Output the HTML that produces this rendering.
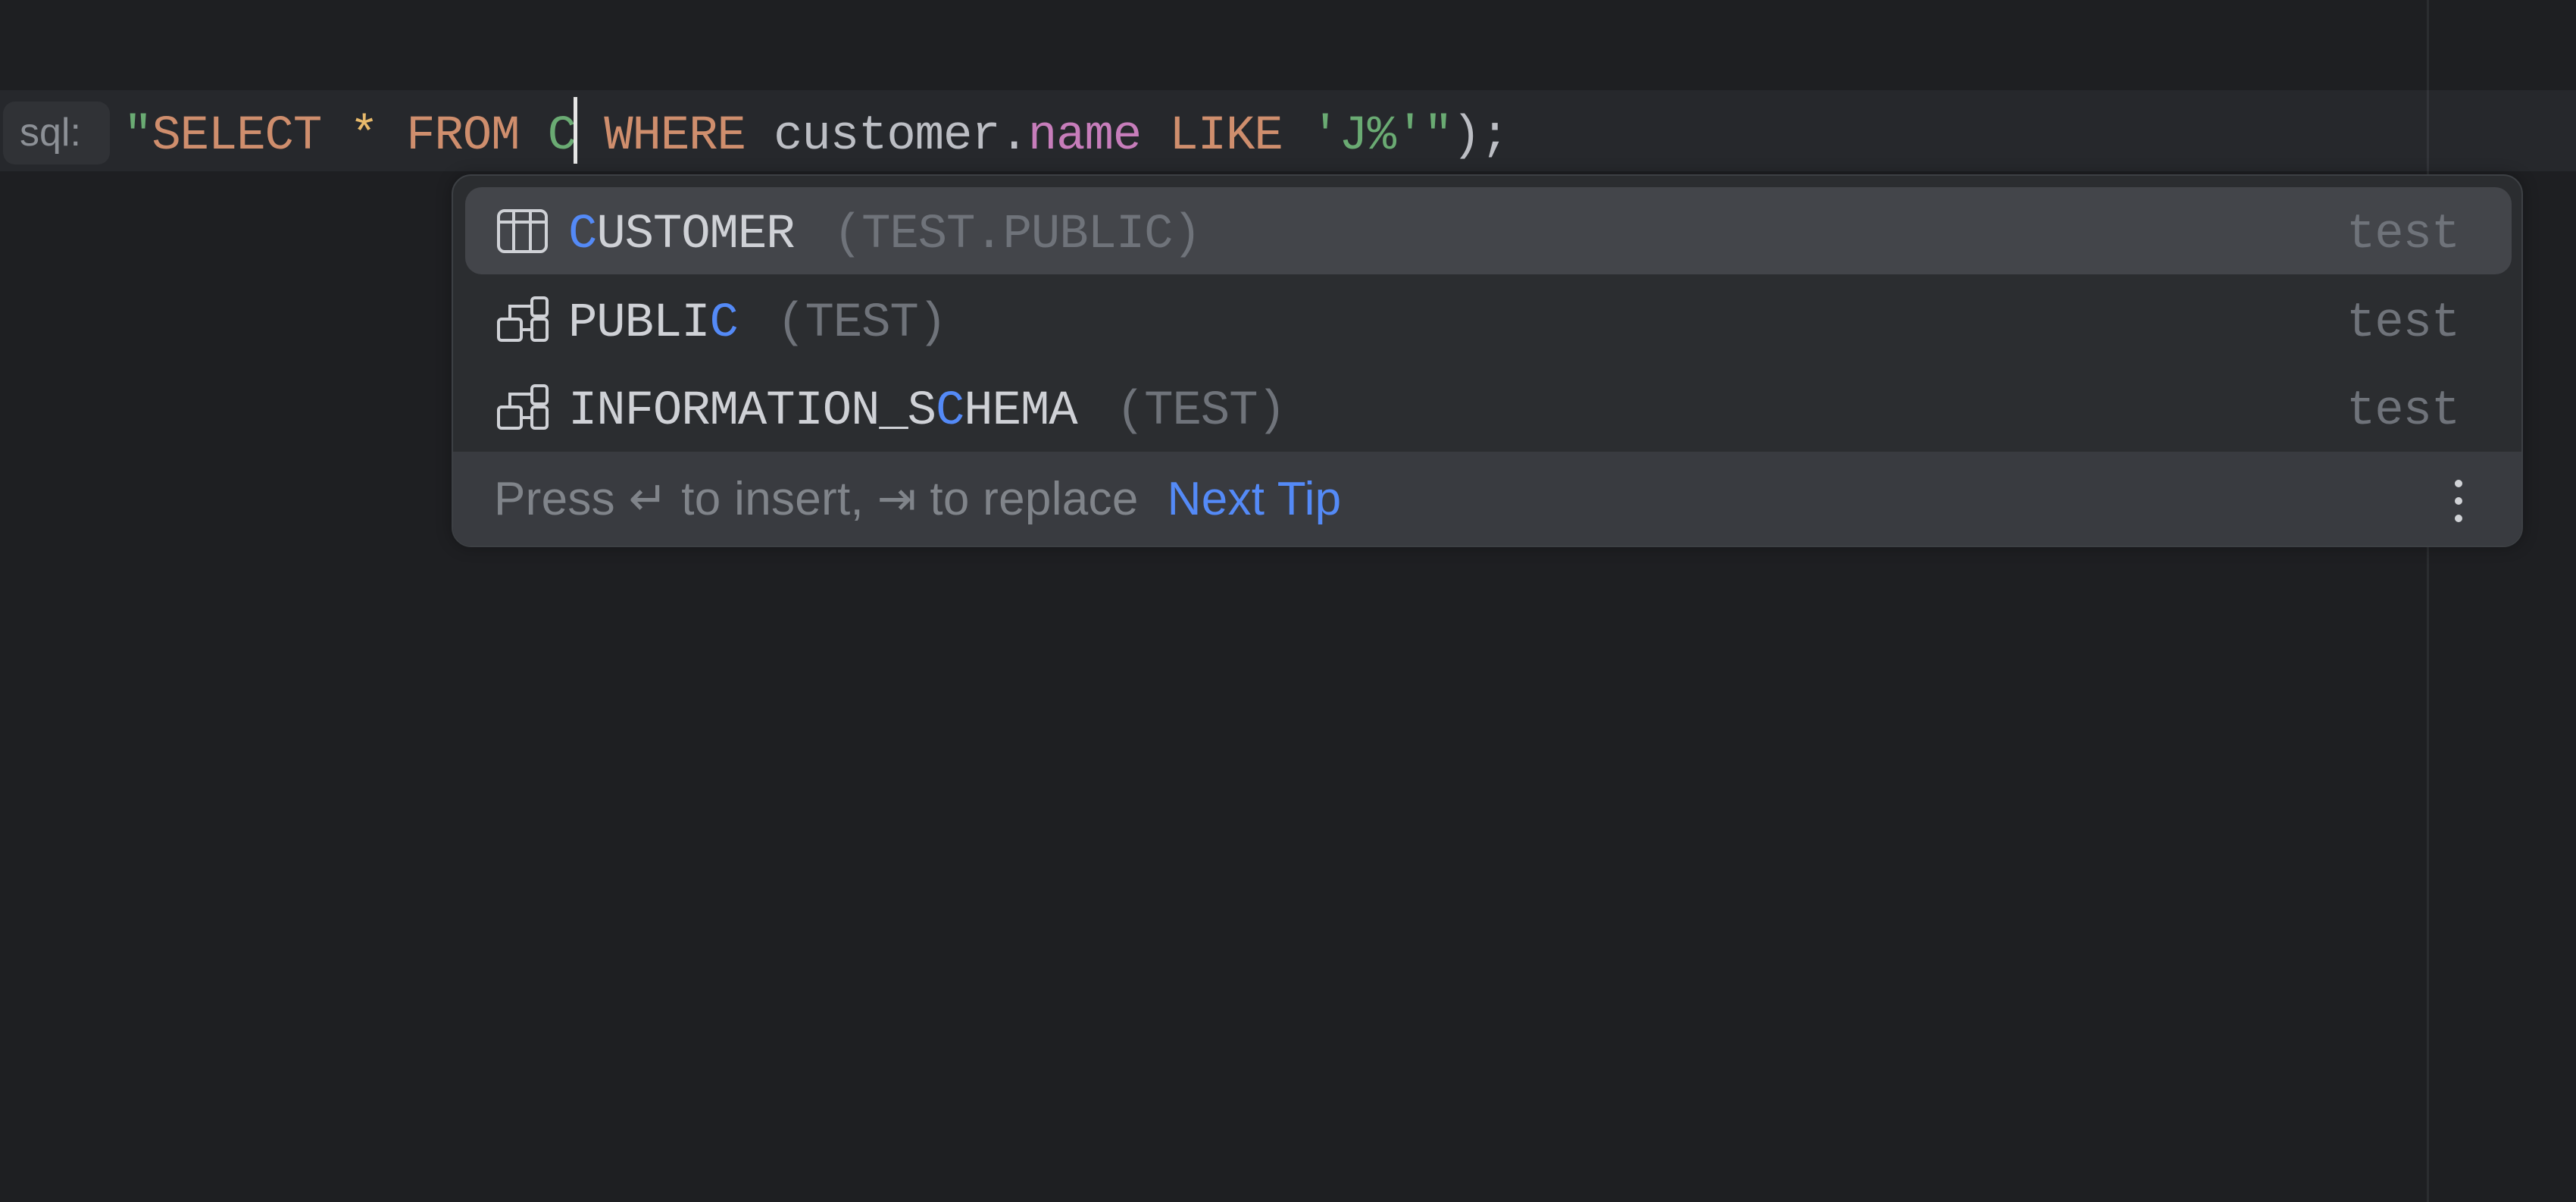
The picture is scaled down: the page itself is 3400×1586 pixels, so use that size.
<!DOCTYPE html>
<html><head><meta charset="utf-8"><style>
html,body{margin:0;padding:0;}
body{width:3400px;height:1586px;background:#1e1f22;position:relative;overflow:hidden;font-family:"Liberation Mono",monospace;}
.abs{position:absolute;}
.mono{font-family:"Liberation Mono",monospace;font-size:64px;letter-spacing:-1.1px;white-space:pre;line-height:1;}
.sans{font-family:"Liberation Sans",sans-serif;white-space:pre;line-height:1;}
.g{margin-left:14px;color:#6f737a}
</style></head><body>
<div class="abs" style="left:3203px;top:0;width:3px;height:1586px;background:#2b2d30"></div>
<div class="abs" style="left:0;top:119px;width:3400px;height:107px;background:#26282c"></div>
<div class="abs" style="left:3203px;top:119px;width:3px;height:107px;background:#33353a"></div>
<div class="abs" style="left:4px;top:134px;width:141px;height:83px;background:#303236;border-radius:16px"></div>
<div class="abs sans" style="left:26px;top:149px;font-size:52px;color:#8c9096">sql:</div>
<div class="abs mono" style="left:163px;top:148px;"><span style="color:#6aab73">"</span><span style="color:#cf8e6d">SELECT </span><span style="color:#e8ba6b">*</span><span style="color:#cf8e6d"> FROM </span><span style="color:#6aab73">C</span> <span style="color:#cf8e6d">WHERE</span> <span style="color:#bcbec4">customer.</span><span style="color:#c77dbb">name</span> <span style="color:#cf8e6d">LIKE</span> <span style="color:#6aab73">'J%'"</span><span style="color:#bcbec4">);</span></div>
<div class="abs" style="left:757px;top:128px;width:5px;height:88px;background:#e6e6e6"></div>

<div class="abs" style="left:596px;top:230px;width:2730px;height:488px;background:#2b2d30;border:2px solid #3d4044;border-radius:26px;overflow:hidden;box-shadow:0 0 20px rgba(0,0,0,0.3)">
  <div class="abs" style="left:16px;top:15px;width:2701px;height:115px;background:#43454a;border-radius:22px"></div>
  <div class="abs" style="left:0;top:364px;width:2730px;height:130px;background:#393b40"></div>
</div>

<svg class="abs" style="left:655px;top:275px" width="70" height="60" viewBox="0 0 70 60" fill="none" stroke="#cfd1d6" stroke-width="4">
<rect x="3" y="3" width="63" height="54" rx="8"/><line x1="3" y1="18" x2="66" y2="18"/><line x1="23" y1="3" x2="23" y2="57"/><line x1="45" y1="3" x2="45" y2="57"/></svg>
<div class="abs mono" style="left:750px;top:278px;color:#cfd1d6"><span style="color:#548af7">C</span>USTOMER <span class="g">(TEST.PUBLIC)</span></div>
<div class="abs mono" style="left:3097px;top:278px;color:#6f737a">test</div>

<svg class="abs" style="left:655px;top:390px" width="70" height="62" viewBox="0 0 70 62" fill="none" stroke="#cfd1d6" stroke-width="4">
<rect x="3" y="31" width="30" height="28" rx="4"/><rect x="47" y="3" width="20" height="24" rx="4"/><rect x="47" y="31" width="20" height="28" rx="4"/><path d="M18 31 V14 H47"/><path d="M33 45 H47"/></svg>
<div class="abs mono" style="left:750px;top:395px;color:#cfd1d6">PUBLI<span style="color:#548af7">C</span> <span class="g">(TEST)</span></div>
<div class="abs mono" style="left:3097px;top:395px;color:#6f737a">test</div>

<svg class="abs" style="left:655px;top:506px" width="70" height="62" viewBox="0 0 70 62" fill="none" stroke="#cfd1d6" stroke-width="4">
<rect x="3" y="31" width="30" height="28" rx="4"/><rect x="47" y="3" width="20" height="24" rx="4"/><rect x="47" y="31" width="20" height="28" rx="4"/><path d="M18 31 V14 H47"/><path d="M33 45 H47"/></svg>
<div class="abs mono" style="left:750px;top:511px;color:#cfd1d6">INFORMATION_S<span style="color:#548af7">C</span>HEMA <span class="g">(TEST)</span></div>
<div class="abs mono" style="left:3097px;top:511px;color:#6f737a">test</div>

<div class="abs sans" style="left:652px;top:628px;font-size:62px;letter-spacing:0.3px;color:#80848a">Press ↵ to insert, ⇥ to replace<span style="color:#548af7;margin-left:38px">Next Tip</span></div>
<div class="abs" style="left:3240px;top:633px;width:10px;height:10px;border-radius:50%;background:#d0d2d6"></div>
<div class="abs" style="left:3240px;top:656px;width:10px;height:10px;border-radius:50%;background:#d0d2d6"></div>
<div class="abs" style="left:3240px;top:679px;width:10px;height:10px;border-radius:50%;background:#d0d2d6"></div>
</body></html>
